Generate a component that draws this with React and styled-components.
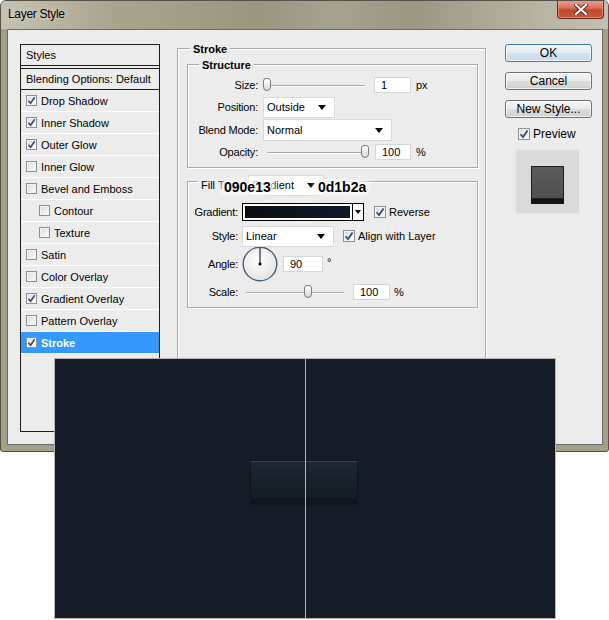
import React from 'react';
import styled, { createGlobalStyle } from 'styled-components';

const GlobalStyle = createGlobalStyle`
  html, body {
    margin: 0;
    padding: 0;
    background: #fff;
  }
  body {
    font-family: "Liberation Sans", Arial, sans-serif;
    font-size: 11px;
    color: #000;
  }
`;

// Whole picture: the dialog plus the canvas pasted over it
const Stage = styled.div`
  position: relative;
  width: 609px;
  height: 620px;
  overflow: hidden;
`;

// Window chrome
const Window = styled.div`
  width: 609px;
  box-sizing: border-box;
  border: 1px solid #55524a;
  border-radius: 6px 6px 3px 3px;
  background: #a69f88;
  overflow: hidden;
`;

const TitleBar = styled.div`
  height: 28px;
  display: flex;
  align-items: center;
  justify-content: space-between;
  padding-left: 7px;
  background: linear-gradient(
    to right,
    #c6c1b1 0%,
    #aba48f 18%,
    #9c957f 42%,
    #a4a28f 55%,
    #9d9681 68%,
    #b7b2a1 88%,
    #c4c0b1 100%
  );
`;

const Title = styled.span`
  font-size: 12px;
  letter-spacing: -0.3px;
  margin-top: -2px;
  text-shadow: 0 0 6px rgba(255, 255, 255, 0.7);
`;

const CloseButton = styled.div`
  align-self: flex-start;
  width: 47px;
  height: 19px;
  margin-right: 4px;
  margin-top: -1px;
  box-sizing: border-box;
  border: 1px solid #5e2a1d;
  border-top: none;
  border-radius: 0 0 4px 4px;
  background: linear-gradient(#e9a590 0%, #d8705a 45%, #c4452a 55%, #c9583a 100%);
  box-shadow: inset 0 0 0 1px rgba(255, 200, 180, 0.45);
  display: flex;
  align-items: center;
  justify-content: center;
`;

const ClientWrap = styled.div`
  padding: 0 5px 6px 6px;
`;

const Client = styled.div`
  display: flex;
  align-items: flex-start;
  border: 1px solid #6a6a6a;
  background: #ececec;
  padding: 14px 10px 12px 12px;
`;

// Styles list on the left
const StylesList = styled.div`
  width: 140px;
  height: 388px;
  box-sizing: border-box;
  border: 1px solid #1c1c1c;
  background: #ececec;
  flex-shrink: 0;
`;

const ListHeader = styled.div`
  height: 20px;
  display: flex;
  align-items: center;
  padding-left: 5px;
  border-bottom: ${({ $double }) => ($double ? '4px double #1c1c1c' : '1px solid #1c1c1c')};
`;

const ListItem = styled.div`
  height: 21px;
  display: flex;
  align-items: center;
  gap: 4px;
  padding-left: ${({ $indent }) => ($indent ? '18px' : '5px')};
  border-bottom: 1px solid #fff;
  background: ${({ $selected }) => ($selected ? '#3399ff' : 'transparent')};
  color: ${({ $selected }) => ($selected ? '#fff' : '#000')};
  font-weight: ${({ $selected }) => ($selected ? 'bold' : 'normal')};
`;

// Checkbox
const Box = styled.span`
  width: ${({ $size }) => $size}px;
  height: ${({ $size }) => $size}px;
  box-sizing: border-box;
  border: 1px solid #8e8f8f;
  background: linear-gradient(135deg, #dcdcdc, #fbfbfb);
  box-shadow: inset 0 0 0 1px #f4f4f4;
  display: inline-flex;
  align-items: center;
  justify-content: center;
  flex-shrink: 0;
`;

function Checkbox({ checked, size = 11 }) {
  return (
    <Box $size={size}>
      {checked && (
        <svg width={size - 2} height={size - 2} viewBox="0 0 10 10">
          <path d="M1.6 5.2 L4 8 L8.6 1.4" fill="none" stroke="#33467a" strokeWidth="1.7" />
        </svg>
      )}
    </Box>
  );
}

// Middle panel with group boxes
const MainPanel = styled.div`
  width: 309px;
  height: 384px;
  margin: 4px 19px 0 17px;
  box-sizing: border-box;
  border: 1px solid #a9a9a9;
  box-shadow: inset 1px 1px 0 #fff, 1px 1px 0 #fff;
  flex-shrink: 0;
`;

const Group = styled.div`
  margin: ${({ $top }) => $top}px 7px 0 9px;
  border: 1px solid #a9a9a9;
  box-shadow: inset 1px 1px 0 #fff, 1px 1px 0 #fff;
  padding-bottom: ${({ $bottom }) => $bottom}px;
`;

const Legend = styled.div`
  display: flex;
  align-items: center;
  gap: 3px;
  width: fit-content;
  height: ${({ $h }) => $h || 13}px;
  margin: ${({ $top }) => $top || -7}px 0 0 ${({ $left }) => $left}px;
  padding: 0 3px;
  background: #ececec;
  font-weight: ${({ $plain }) => ($plain ? 'normal' : 'bold')};
`;

const Row = styled.div`
  display: flex;
  align-items: center;
  height: ${({ $h }) => $h}px;
  margin-top: ${({ $mt }) => $mt || 0}px;
`;

const Label = styled.span`
  width: ${({ $w }) => $w}px;
  text-align: right;
  flex-shrink: 0;
  letter-spacing: -0.2px;
`;

const Unit = styled.span`
  margin-left: ${({ $ml }) => $ml}px;
  align-self: ${({ $top }) => ($top ? 'flex-start' : 'center')};
  margin-top: ${({ $top }) => ($top ? '10px' : '0')};
`;

const TextBox = styled.div`
  width: ${({ $w }) => $w}px;
  height: 16px;
  margin-left: ${({ $ml }) => $ml}px;
  box-sizing: border-box;
  border: 1px solid #d6d6d6;
  background: #fff;
  padding-left: 6px;
  display: flex;
  align-items: center;
`;

const SelectBox = styled.div`
  position: relative;
  width: ${({ $w }) => $w}px;
  height: ${({ $h }) => $h || 21}px;
  margin-left: ${({ $ml }) => $ml || 0}px;
  box-sizing: border-box;
  border: 1px solid #d9d9d9;
  background: #fff;
  padding-left: 3px;
  display: flex;
  align-items: center;
  font-weight: normal;

  &::after {
    content: '';
    position: absolute;
    right: 8px;
    top: 50%;
    margin-top: -2px;
    border-left: 4px solid transparent;
    border-right: 4px solid transparent;
    border-top: 5px solid #000;
  }
`;

// Slider with a thumb placed from its value
const SliderTrack = styled.div`
  position: relative;
  width: ${({ $w }) => $w}px;
  height: 14px;
  margin-left: ${({ $ml }) => $ml}px;

  &::before {
    content: '';
    position: absolute;
    left: 0;
    right: 0;
    top: 7px;
    height: 1px;
    background: #a8a8a8;
    box-shadow: 0 1px 0 #fff;
  }
`;

const Thumb = styled.div`
  position: absolute;
  top: 0;
  width: 8px;
  height: 13px;
  margin-left: -4px;
  box-sizing: border-box;
  border: 1px solid #7c7c7c;
  border-radius: 3px 3px 4px 4px;
  background: linear-gradient(#ffffff, #d8d8d8);
`;

function Slider({ width, value, ml }) {
  return (
    <SliderTrack $w={width} $ml={ml}>
      <Thumb style={{ left: `${value * 100}%` }} />
    </SliderTrack>
  );
}

const GradientPicker = styled.div`
  display: flex;
  width: 122px;
  height: 18px;
  margin-left: 4px;
  box-sizing: border-box;
  border: 1px solid #000;
  background: #fff;
`;

const GradientFill = styled.div`
  flex: 1;
  margin: 1px;
  border: 1px solid #fff;
  background: linear-gradient(to right, #090e13, #0d1b2a);
`;

const PickerArrow = styled.div`
  width: 10px;
  border-left: 1px solid #000;
  display: flex;
  align-items: center;
  justify-content: center;

  &::after {
    content: '';
    border-left: 3px solid transparent;
    border-right: 3px solid transparent;
    border-top: 4px solid #000;
  }
`;

const CheckLabel = styled.label`
  display: flex;
  align-items: center;
  gap: 3px;
  margin-left: ${({ $ml }) => $ml}px;
  font-size: ${({ $fs }) => $fs || 11}px;
`;

const Dial = styled.div`
  width: 36px;
  height: 36px;
  margin-left: 4px;
  flex-shrink: 0;
`;

// Right column
const ButtonColumn = styled.div`
  width: 87px;
  display: flex;
  flex-direction: column;
  flex-shrink: 0;
`;

const Button = styled.div`
  height: 18px;
  margin-top: ${({ $first }) => ($first ? '0' : '10px')};
  box-sizing: border-box;
  border: 1px solid ${({ $focused }) => ($focused ? '#3c7fb1' : '#707070')};
  border-radius: 3px;
  background: ${({ $focused }) =>
    $focused
      ? 'linear-gradient(#eef5fa 0%, #e2ecf3 50%, #d2e2ee 51%, #c7dbea 100%)'
      : 'linear-gradient(#f3f3f3 0%, #ebebeb 50%, #dddddd 51%, #d0d0d0 100%)'};
  box-shadow: inset 0 0 0 1px rgba(255, 255, 255, 0.7);
  display: flex;
  align-items: center;
  justify-content: center;
  font-size: 12px;
`;

const PreviewRow = styled.div`
  margin-top: 9px;
  padding-left: 13px;
`;

const PreviewBox = styled.div`
  width: 65px;
  height: 65px;
  margin: 8px 0 0 10px;
  box-sizing: border-box;
  border: 1px solid #e9e9e9;
  background: #dadada;
  display: flex;
  align-items: flex-start;
  justify-content: center;
  padding-top: 16px;
`;

const PreviewSquare = styled.div`
  width: 33px;
  height: 33px;
  box-sizing: border-box;
  border: 1px solid #1d1d1d;
  background: linear-gradient(#5c5c5c, #4f4f4f);
  box-shadow: 0 5px 0 #141414;
`;

// Canvas pasted over the lower part of the dialog
const Canvas = styled.div`
  position: absolute;
  left: 54px;
  top: 358px;
  width: 502px;
  height: 261px;
  box-sizing: border-box;
  border: 1px solid #b3b3b3;
  background: #161d29;
  display: flex;
  flex-direction: column;
  align-items: center;
  padding-top: 102px;
`;

const Guide = styled.div`
  position: absolute;
  top: 0;
  bottom: 0;
  left: 250px;
  width: 1px;
  background: #4fe0f2;
`;

const DarkButton = styled.div`
  width: 106px;
  height: 37px;
  margin-left: -2px;
  border-radius: 2px;
  background: linear-gradient(#1d2832, #141c25);
  box-shadow: inset 0 1px 0 #3b4954, 0 0 0 1px #0e141a, 0 6px 0 #10161e, 0 7px 2px rgba(0, 0, 0, 0.25);
`;

// Colour notes pasted on top of the Fill Type row
const Note = styled.span`
  position: absolute;
  top: 179px;
  left: ${({ $x }) => $x}px;
  font-family: "Liberation Sans", Arial, sans-serif;
  font-size: 14px;
  font-weight: bold;
  color: #000;
  text-shadow: 0 0 3px #fff, 0 0 5px #fff, 0 0 7px #fff, 0 0 8px #fff, 0 0 9px #fff, 0 0 10px #fff,
    0 0 12px #fff, 0 0 12px #fff;
`;

const styleItems = [
  { name: 'Drop Shadow', checked: true },
  { name: 'Inner Shadow', checked: true },
  { name: 'Outer Glow', checked: true },
  { name: 'Inner Glow' },
  { name: 'Bevel and Emboss' },
  { name: 'Contour', indent: true },
  { name: 'Texture', indent: true },
  { name: 'Satin' },
  { name: 'Color Overlay' },
  { name: 'Gradient Overlay', checked: true },
  { name: 'Pattern Overlay' },
  { name: 'Stroke', checked: true, selected: true },
];

export default function App() {
  return (
    <Stage>
      <GlobalStyle />
      <Window>
        <TitleBar>
          <Title>Layer Style</Title>
          <CloseButton>
            <svg width="14" height="11" viewBox="0 0 14 11">
              <path
                d="M2 1 L12 10 M12 1 L2 10"
                stroke="#5a2418"
                strokeWidth="4"
                strokeLinecap="square"
              />
              <path d="M2 1 L12 10 M12 1 L2 10" stroke="#fff" strokeWidth="2.2" strokeLinecap="square" />
            </svg>
          </CloseButton>
        </TitleBar>

        <ClientWrap>
          <Client>
            <StylesList>
              <ListHeader $double>Styles</ListHeader>
              <ListHeader>Blending Options: Default</ListHeader>
              {styleItems.map((item) => (
                <ListItem key={item.name} $indent={item.indent} $selected={item.selected}>
                  <Checkbox checked={item.checked} />
                  {item.name}
                </ListItem>
              ))}
            </StylesList>

            <MainPanel>
              <Legend $left={12}>Stroke</Legend>

              <Group $top={9} $bottom={5}>
                <Legend $left={11}>Structure</Legend>
                <Row $h={22} $mt={3}>
                  <Label $w={70}>Size:</Label>
                  <Slider width={100} value={0.02} ml={7} />
                  <TextBox $w={37} $ml={9}>1</TextBox>
                  <Unit $ml={5}>px</Unit>
                </Row>
                <Row $h={22}>
                  <Label $w={70}>Position:</Label>
                  <SelectBox $w={72} $ml={5}>Outside</SelectBox>
                </Row>
                <Row $h={24}>
                  <Label $w={70}>Blend Mode:</Label>
                  <SelectBox $w={129} $h={22} $ml={5}>Normal</SelectBox>
                </Row>
                <Row $h={20}>
                  <Label $w={70}>Opacity:</Label>
                  <Slider width={98} value={1} ml={9} />
                  <TextBox $w={36} $ml={10}>100</TextBox>
                  <Unit $ml={5}>%</Unit>
                </Row>
              </Group>

              <Group $top={13} $bottom={5}>
                <Legend $left={10} $top={-8} $h={22} $plain>
                  Fill Type:
                  <SelectBox $w={76}>Gradient</SelectBox>
                </Legend>
                <Row $h={20} $mt={6}>
                  <Label $w={50}>Gradient:</Label>
                  <GradientPicker>
                    <GradientFill />
                    <PickerArrow />
                  </GradientPicker>
                  <CheckLabel $ml={10}>
                    <Checkbox checked size={12} />
                    Reverse
                  </CheckLabel>
                </Row>
                <Row $h={20} $mt={4}>
                  <Label $w={50}>Style:</Label>
                  <SelectBox $w={92} $ml={4}>Linear</SelectBox>
                  <CheckLabel $ml={9}>
                    <Checkbox checked size={12} />
                    Align with Layer
                  </CheckLabel>
                </Row>
                <Row $h={36}>
                  <Label $w={50}>Angle:</Label>
                  <Dial>
                    <svg width="36" height="36" viewBox="0 0 36 36">
                      <defs>
                        <radialGradient id="dialFill" cx="0.45" cy="0.4" r="0.6">
                          <stop offset="0" stopColor="#ffffff" />
                          <stop offset="1" stopColor="#e4e4e4" />
                        </radialGradient>
                      </defs>
                      <circle cx="18" cy="18" r="16.8" fill="url(#dialFill)" stroke="#4b5c7e" strokeWidth="1.4" />
                      <line x1="18" y1="18" x2="18" y2="1.5" stroke="#000" strokeWidth="1" />
                      <circle cx="18" cy="18" r="1.6" fill="#000" />
                    </svg>
                  </Dial>
                  <TextBox $w={40} $ml={5}>90</TextBox>
                  <Unit $ml={4} $top>°</Unit>
                </Row>
                <Row $h={20}>
                  <Label $w={50}>Scale:</Label>
                  <Slider width={98} value={0.63} ml={8} />
                  <TextBox $w={37} $ml={9}>100</TextBox>
                  <Unit $ml={4}>%</Unit>
                </Row>
              </Group>
            </MainPanel>

            <ButtonColumn>
              <Button $first $focused>OK</Button>
              <Button>Cancel</Button>
              <Button>New Style...</Button>
              <PreviewRow>
                <CheckLabel $ml={0} $fs={12}>
                  <Checkbox checked size={12} />
                  Preview
                </CheckLabel>
              </PreviewRow>
              <PreviewBox>
                <PreviewSquare />
              </PreviewBox>
            </ButtonColumn>
          </Client>
        </ClientWrap>
      </Window>

      <Note $x={224}>090e13</Note>
      <Note $x={318}>0d1b2a</Note>

      <Canvas>
        <DarkButton />
        <Guide />
      </Canvas>
    </Stage>
  );
}
